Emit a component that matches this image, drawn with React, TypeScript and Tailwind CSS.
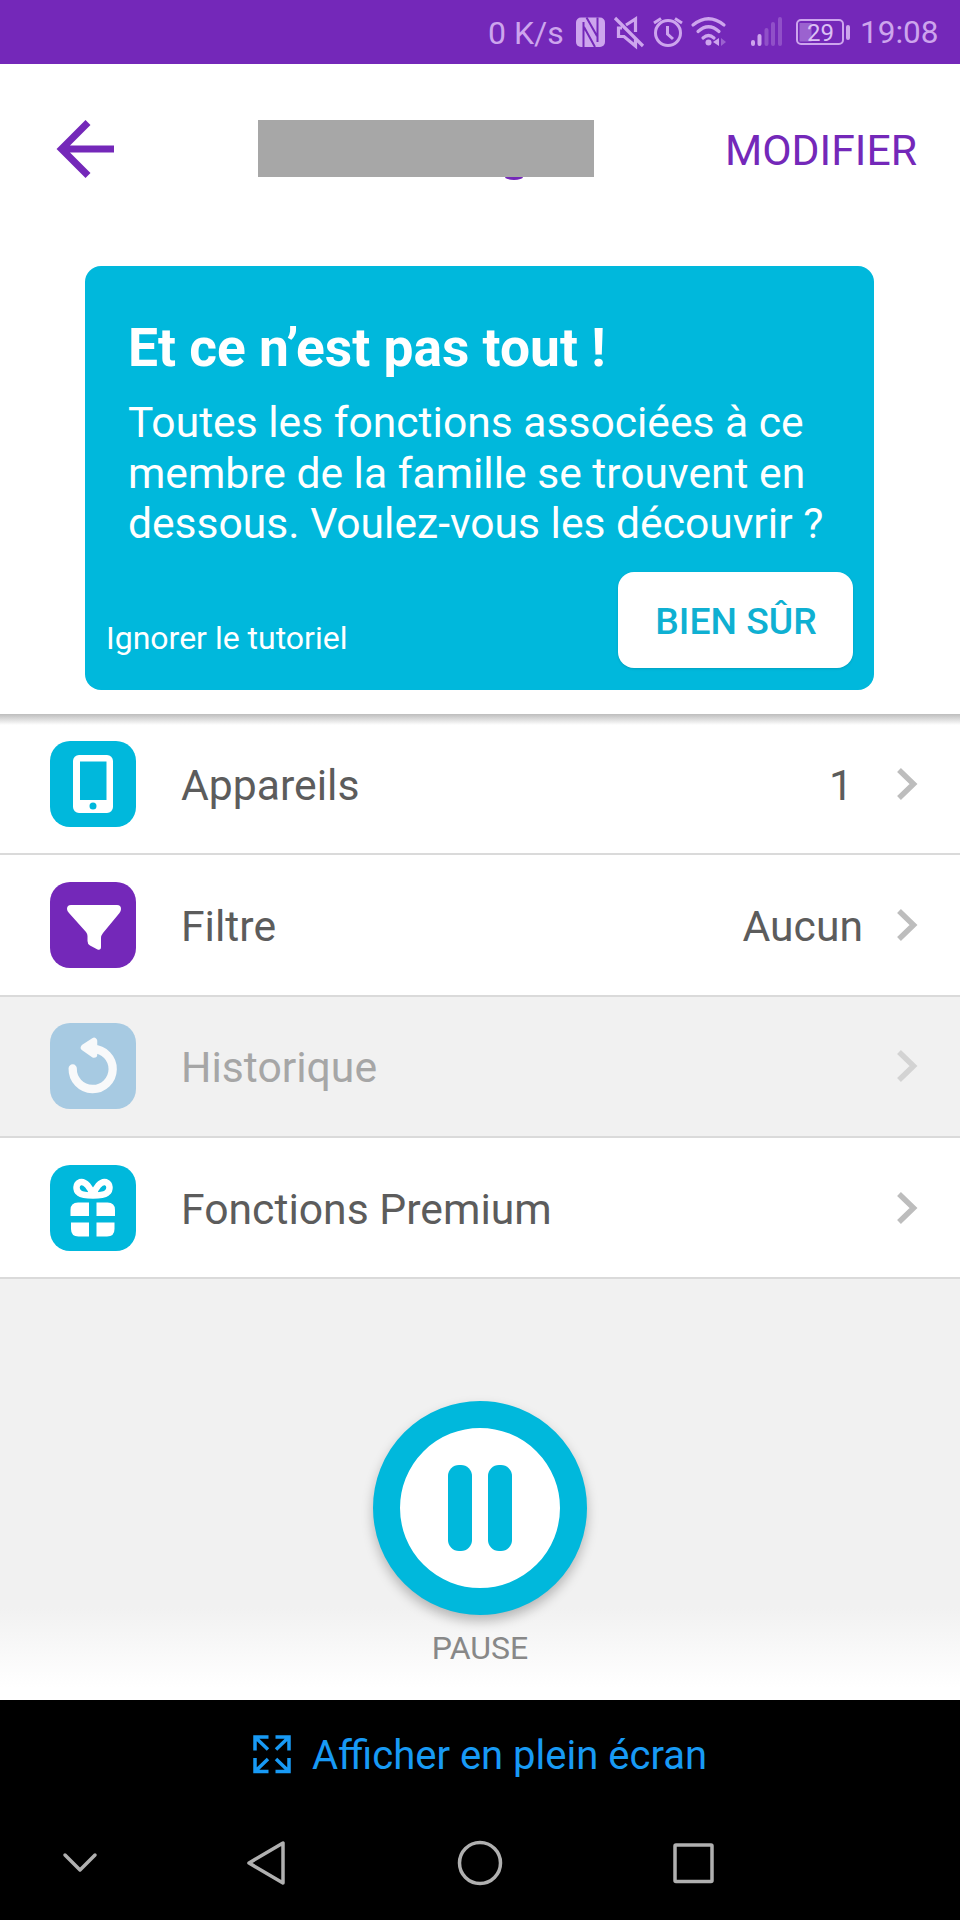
import type {ReactNode} from "react";

const rows = [
    {label: "Appareils", value: "1", valueClass: "mr-[43px]", tile: "bg-[#00b8dc]", icon: <PhoneIcon/>},
    {label: "Filtre", value: "Aucun", valueClass: "mr-[33px]", tile: "bg-[#7428b9]", icon: <FunnelIcon/>},
    {label: "Historique", tile: "bg-[#a7cae2]", icon: <HistoryIcon/>, disabled: true},
    {label: "Fonctions Premium", tile: "bg-[#00b8dc]", icon: <GiftIcon/>},
]

function PhoneIcon() {
    return (
        <svg viewBox="0 0 86 86" className="size-full">
            <path fillRule="evenodd" fill="#fff"
                  d="M29 14h28a6 6 0 0 1 6 6v46a6 6 0 0 1-6 6H29a6 6 0 0 1-6-6V20a6 6 0 0 1 6-6ZM30 20.500v38.500h26.500v-38.500ZM43 61.500a3.500 3.500 0 1 0 0 7a3.500 3.500 0 0 0 0-7Z"/>
        </svg>
    )
}

function FunnelIcon() {
    return (
        <svg viewBox="0 0 86 86" className="size-full">
            <path fill="#fff"
                  d="M21 23H67Q71 23 71 27Q71 29 69.500 31L53 51Q51 53.500 51 56V65Q51 68.500 47.500 67.500L40 63.500Q37.500 62 37.500 59V54Q37.500 52 36 50L19 31Q17 29 17 27Q17 23 21 23Z"/>
        </svg>
    )
}

function HistoryIcon() {
    return (
        <svg viewBox="0 0 86 86" className="size-full" fill="none" stroke="#f8f9fa" strokeLinecap="round">
            <path strokeWidth="8.300" d="M22.700 45.500A20 20 0 1 0 43 26"/>
            <path fill="#f8f9fa" strokeWidth="6.500" strokeLinejoin="round" d="M34 24.500L44 18V31.500Z"/>
        </svg>
    )
}

function GiftIcon() {
    return (
        <svg viewBox="0 0 86 86" className="size-full">
            <path fill="none" stroke="#fff" strokeWidth="6.500" strokeLinejoin="round"
                  d="M43 30.500C41 23 35 15.500 30 17.200C25.500 19 25.500 25 29 27.800C32 30 38 30.500 43 30.500C48 30.500 54 30 57 27.800C60.500 25 60.500 19 56 17.200C51 15.500 45 23 43 30.500Z"/>
            <path fill="#fff"
                  d="M28 37.500H39V51H20.500V45Q20.500 37.500 28 37.500ZM46.500 37.500H57.500Q65 37.500 65 45V51H46.500ZM21 57.500H39V71.500H28.500Q21 71.500 21 64ZM46.500 57.500H64.500V64Q64.500 71.500 57 71.500H46.500Z"/>
        </svg>
    )
}

function StatusBar() {
    return (
        <div className="flex h-16 items-center bg-[#7428b9] pl-[488px] text-[32px] text-[#cda5ed]">
            <span className="w-[87px] pt-0.5 whitespace-nowrap">0 K/s</span>
            <svg width="290" height="64" viewBox="575 0 290 64" className="-mr-[5px] shrink-0" fill="none"
                 stroke="#cda5ed" strokeWidth="2.500">
                {/* nfc */}
                <rect x="576" y="17.500" width="29" height="29.500" rx="5" fill="#cda5ed" stroke="none"/>
                <path stroke="#7428b9" strokeWidth="2"
                      d="M583.500 47V22M586.500 17.500L597 36M597.500 17.500V42M584 27L595 47"/>
                {/* muted */}
                <path strokeWidth="3.200" d="M615 18L643 46M622 28H618.500V36.500H624L635.500 46V39M626 25L635.500 19V32"/>
                {/* alarm */}
                <circle cx="668" cy="33" r="12.500" strokeWidth="3"/>
                <path strokeWidth="3" d="M667.500 26V34L673 39M654 23L661 18.500M682 23L675 18.500"/>
                {/* wifi */}
                <path strokeWidth="3.200" strokeLinecap="round"
                      d="M693 25Q708.500 12.500 724 25M698 31.500Q708.500 22 719 31.500M703 38Q708.500 33 714 38"/>
                <circle cx="708.500" cy="42.500" r="3" fill="#cda5ed" stroke="none"/>
                <path fill="#cda5ed" stroke="none" d="M713 42L719 38V46Z"/>
                <path fill="#9b62cf" stroke="none" d="M721 38L726 42L721 46Z"/>
                {/* signal */}
                <path strokeWidth="4" strokeLinecap="round" d="M753 42V44M759.500 36V44"/>
                <path stroke="#9050c8" strokeWidth="4" strokeLinecap="round"
                      d="M766.500 30V44M773 24V44M780 19V44"/>
                {/* battery */}
                <rect x="797" y="20" width="46" height="24" rx="4" strokeWidth="2"/>
                <rect x="799.500" y="23" width="12" height="18.500" fill="#9b62cf" stroke="none"/>
                <path strokeWidth="4" strokeLinecap="round" d="M848 27V38"/>
                <text x="820.500" y="41" textAnchor="middle" fontSize="24" fill="#dcc0f4" stroke="none">29</text>
            </svg>
            <span className="pt-0.5 text-[31.500px]">19:08</span>
        </div>
    )
}

function TopBar() {
    return (
        <div className="flex h-[170px] items-center justify-between pr-[43px] pl-[56px]">
            <svg width="58" height="60" viewBox="0 0 58 60" fill="none" stroke="#7428b9" strokeWidth="7">
                <path d="M32 3.500L5.500 30L32 56.500M5 30H58"/>
            </svg>
            <div className="relative -mt-px mr-[-14px] h-[57px] w-[336px] bg-[#a7a7a7]">
                <div className="absolute top-[57px] left-[247px] h-[3px] w-[18px] rounded-[0_0_9px_9px/0_0_3px_3px] bg-[#7428b9]"/>
            </div>
            <span className="pt-0.5 text-[42.700px] text-[#7428b9]">MODIFIER</span>
        </div>
    )
}

function Tutorial() {
    return (
        <div className="mt-8 ml-[85px] flex h-[424px] w-[789px] flex-col rounded-2xl bg-[#00b8dc] text-white">
            <h1 className="mt-[51px] ml-[43px] text-[53.300px] leading-[62px] font-bold">Et ce n’est pas tout !</h1>
            <p className="mt-[18px] ml-[43px] text-[42.600px] leading-[50.500px] whitespace-nowrap">
                Toutes les fonctions associées à ce<br/>
                membre de la famille se trouvent en<br/>
                dessous. Voulez-vous les découvrir ?
            </p>
            <div className="mt-[23px] mr-[21px] ml-[21px] flex items-center justify-between">
                <button className="mt-[36px] text-[32px]">Ignorer le tutoriel</button>
                <button
                    className="h-24 w-[235px] rounded-2xl bg-white pt-1 pl-px text-[37.300px] font-medium text-[#0fb0d2] shadow">
                    BIEN SÛR
                </button>
            </div>
        </div>
    )
}

interface RowProps {
    label: string
    value?: string
    valueClass?: string
    tile: string
    icon: ReactNode
    disabled?: boolean
}

function Row({label, value, valueClass, tile, icon, disabled}: RowProps) {
    return (
        <li className={`flex h-[141.300px] items-center border-b-[2.500px] border-[#dadada] pr-[42px] pl-[50px] text-[42.700px] ${disabled ? "bg-[#f1f1f1] text-[#a6a6a6]" : "bg-white text-[#5c5c5c]"}`}>
            <div className={`size-[86px] shrink-0 rounded-[20px] ${tile}`}>{icon}</div>
            <span className="ml-[45px] grow pt-0.5">{label}</span>
            {value && <span className={`pt-0.5 ${valueClass}`}>{value}</span>}
            <svg width="22" height="34" viewBox="0 0 22 34" fill="none" strokeWidth="5.500"
                 stroke={disabled ? "#d3d3d3" : "#bdbdbd"}>
                <path d="M3 3L17.500 17L3 31"/>
            </svg>
        </li>
    )
}

function PauseArea() {
    return (
        <div className="flex h-[421px] flex-col items-center bg-linear-to-b from-[#f1f1f1] from-78% to-white to-97%">
            <button
                className="mt-[122px] flex size-[214px] shrink-0 items-center justify-center gap-4 rounded-full border-[27px] border-[#00b8dc] bg-white shadow-[0_6px_12px_rgba(0,0,0,0.25)]">
                <span className="h-[86px] w-6 rounded-[11px] bg-[#00b8dc]"/>
                <span className="h-[86px] w-6 rounded-[11px] bg-[#00b8dc]"/>
            </button>
            <span className="mt-[13px] text-[32px] leading-10 text-[#888]">PAUSE</span>
        </div>
    )
}

function SystemBar() {
    return (
        <div className="h-[220px] bg-black">
            <div className="flex h-[110px] items-center pl-[252px] text-[40px] text-[#189af5]">
                <svg width="40" height="40" viewBox="0 0 40 40" className="-mt-0.5" fill="none" stroke="currentColor"
                     strokeWidth="3.500">
                    <path
                        d="M16.500 3H3V16.500M3 3L16 15.500M23.500 3H37V16.500M37 3L24 15.500M3 24V37.500H16.500M3 37.500L16 25M37 24V37.500H23.500M37 37.500L24 25"/>
                </svg>
                <span className="ml-5 pt-0.5">Afficher en plein écran</span>
            </div>
            <svg width="960" height="110" viewBox="0 1810 960 110" fill="none" stroke="#b0b0b0" strokeWidth="3.500"
                 strokeLinejoin="round" strokeLinecap="round">
                <path d="M65 1855L80 1870L95 1855"/>
                <path d="M283 1843V1883L249 1863Z"/>
                <circle cx="480" cy="1863" r="20.500"/>
                <rect x="675" y="1845" width="37" height="36.500" rx="1"/>
            </svg>
        </div>
    )
}

export default function App() {
    return (
        <div className="h-[1920px] w-[960px] overflow-hidden bg-white font-[Roboto,sans-serif]">
            <StatusBar/>
            <TopBar/>
            <Tutorial/>
            {/* shadow cast on top of the scrolled list */}
            <div className="relative z-10 mt-6 h-[11px] bg-linear-to-b from-[#bdbdbd] to-white"/>
            <ul className="-mt-[11px]">
                {rows.map((row) => <Row key={row.label} {...row}/>)}
            </ul>
            <PauseArea/>
            <SystemBar/>
        </div>
    )
}
